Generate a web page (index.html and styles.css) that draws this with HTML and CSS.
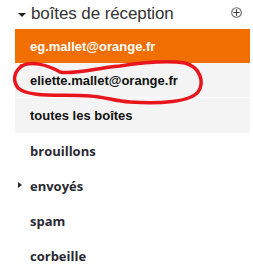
FILE: index.html
```html
<!DOCTYPE html>
<html lang="fr">
<head>
<meta charset="utf-8">
<link rel="stylesheet" href="styles.css">
</head>
<body>
<div class="panel">
  <div class="header">
    <span class="caret-down"></span>
    <span class="title">boîtes de réception</span>
    <svg class="add" width="11" height="11" viewBox="0 0 11 11">
      <circle cx="5.5" cy="5.5" r="4.8" fill="none" stroke="#666" stroke-width="1.1"/>
      <path d="M5.5 2.3V8.7M2.3 5.5H8.7" stroke="#444" stroke-width="1.2"/>
    </svg>
  </div>
  <ul class="list">
    <li class="row account selected">eg.mallet@orange.fr</li>
    <li class="row account">eliette.mallet@orange.fr</li>
    <li class="row account last">toutes les boîtes</li>
    <li class="row folder">brouillons</li>
    <li class="row folder"><span class="caret-right"></span>envoyés</li>
    <li class="row folder">spam</li>
    <li class="row folder">corbeille</li>
  </ul>
  <svg class="scribble" width="253" height="268" viewBox="0 0 253 268">
    <path d="M21 66 C31 61, 46 64, 60 72 C74 75, 95 68, 120 66 C140 63, 165 60, 185 63 C200 67, 205 82, 198 92 C190 102, 160 104, 130 102 C115 101, 105 97, 90 96 C60 94, 30 98, 18 88 C12 80, 14 70, 24 65" fill="none" stroke="#e8151d" stroke-width="3.5" stroke-linecap="round"/>
  </svg>
</div>
</body>
</html>
```

FILE: styles.css
```css
html, body {
  margin: 0;
  padding: 0;
  background: #fff;
}
.panel {
  position: relative;
  width: 253px;
  height: 268px;
  overflow: hidden;
}
.header {
  height: 29px;
  display: flex;
  align-items: center;
  padding-left: 18px;
  padding-right: 11px;
  box-sizing: border-box;
}
.caret-down {
  width: 0;
  height: 0;
  border-left: 4px solid transparent;
  border-right: 4px solid transparent;
  border-top: 4px solid #222;
  margin-right: 5px;
  margin-top: 0;
}
.title {
  font-family: "Liberation Sans", Arial, sans-serif;
  font-size: 17px;
  letter-spacing: -0.1px;
  color: #333;
  flex: 1;
  line-height: 22px;
  margin-top: -2px;
}
.add {
  display: block;
  margin-top: -5px;
}
.list {
  list-style: none;
  margin: 0;
  padding: 0;
  margin-left: 15px;
  width: 235px;
}
.row {
  height: 35px;
  box-sizing: border-box;
  display: flex;
  align-items: center;
  padding-left: 15px;
  font-weight: bold;
  font-size: 13px;
}
.account {
  font-family: "Liberation Sans", Arial, sans-serif;
  font-size: 13px;
  background: #f4f4f4;
  color: #111;
  border-bottom: 1px solid #fff;
}
.account.selected {
  background: #f16e00;
  color: #fff;
  border-bottom: none;
  height: 34px;
}
.account.last {
  border-bottom: none;
}
.folder {
  font-family: "Open Sans", "Noto Sans", sans-serif;
  font-size: 13px;
  color: #2a2a33;
  position: relative;
}
.caret-right {
  position: absolute;
  left: 3px;
  top: 14px;
  width: 0;
  height: 0;
  border-top: 3.5px solid transparent;
  border-bottom: 3.5px solid transparent;
  border-left: 4px solid #2a2a33;
}
.scribble {
  position: absolute;
  left: 0;
  top: 0;
  pointer-events: none;
}
```
